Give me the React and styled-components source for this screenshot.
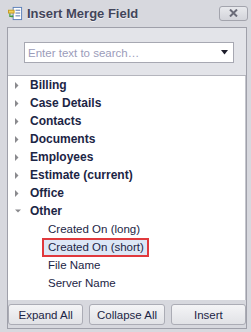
import React from "react";
import styled, { createGlobalStyle } from "styled-components";

const Global = createGlobalStyle`
  html, body { margin: 0; padding: 0; background: #d7d8de; }
  body { font-family: "Liberation Sans", Arial, sans-serif; }
`;

const Window = styled.div`
  width: 251px;
  height: 332px;
  background: #d7d8de;
  display: flex;
  flex-direction: column;
  box-sizing: border-box;
`;

const TitleBar = styled.div`
  height: 27px;
  display: flex;
  align-items: center;
  padding: 0 3px 0 8px;
  gap: 4px;
  flex-shrink: 0;
`;

const Title = styled.div`
  flex: 1;
  font-weight: bold;
  font-size: 13px;
  color: #42455a;
  text-shadow: 0 1px 0 #f2f2f5;
`;

const CloseButton = styled.div`
  width: 29px;
  height: 15px;
  box-sizing: border-box;
  border: 1px solid #a3a4ad;
  border-radius: 3px;
  background: linear-gradient(#e8e9ed, #d3d4da);
  display: flex;
  align-items: center;
  justify-content: center;
  margin-top: -1px;
`;

const Frame = styled.div`
  flex: 1;
  margin: 0 4px 3px 7px;
  border: 1px solid #9fa0aa;
  display: flex;
  flex-direction: column;
  background: #d7d8de;
`;

const SearchArea = styled.div`
  background: #e3e4e9;
  padding: 14px 12px 12px 16px;
  border-bottom: 1px solid #b4b5bd;
`;

const SearchBox = styled.div`
  height: 21px;
  box-sizing: border-box;
  border: 1px solid #a7a8b2;
  background: #fff;
  display: flex;
  align-items: center;
  padding: 0 5px 0 3px;
`;

const Placeholder = styled.span`
  flex: 1;
  font-size: 11.5px;
  color: #9b9cba;
`;

const Tree = styled.div`
  flex: 1;
  background: #fff;
  border-right: 1px solid #c4c5cc;
  display: flex;
  flex-direction: column;
`;

const Row = styled.div`
  height: 18px;
  display: flex;
  align-items: center;
  padding-left: ${(p) => p.$indent}px;
`;

const Arrow = styled.span`
  width: 13px;
  display: flex;
  align-items: center;
  justify-content: flex-start;
`;

const Label = styled.span`
  font-size: ${(p) => (p.$bold ? "12px" : "11.5px")};
  font-weight: ${(p) => (p.$bold ? "bold" : "normal")};
  color: #1c2545;
  line-height: 15px;
  padding: ${(p) => (p.$bold ? "0" : "0 3px 0 4px")};
  border: 2px solid transparent;
  ${(p) =>
    p.$selected &&
    `
    background: #dce7f6;
    border-color: #e0393d;
  `}
`;

const ButtonBar = styled.div`
  display: flex;
  gap: 6px;
  padding: 4px 0 3px 0;
`;

const Button = styled.div`
  flex: 1;
  height: 21px;
  box-sizing: border-box;
  border: 1px solid #abacb5;
  border-radius: 3px;
  background: linear-gradient(#f4f4f6, #e1e2e6);
  display: flex;
  align-items: center;
  justify-content: center;
  font-size: 11.5px;
  color: #1c2545;
`;

const DocIcon = () => (
  <svg width="15" height="15" viewBox="0 0 16 16">
    <rect x="5.5" y="1.5" width="9" height="13" fill="#fff" stroke="#5b7fb8" />
    <line x1="8" y1="4.5" x2="13" y2="4.5" stroke="#4d6fa8" />
    <line x1="8" y1="7.5" x2="13" y2="7.5" stroke="#4d6fa8" />
    <line x1="8" y1="10.5" x2="13" y2="10.5" stroke="#4d6fa8" />
    <rect x="0.5" y="4.5" width="6" height="3" fill="#f3d25a" stroke="#c69a1e" />
    <path d="M2 8 L2 11 L5 11" fill="none" stroke="#3f9a3a" strokeWidth="1.2" />
    <path d="M4 9.5 L6 11 L4 12.5 Z" fill="#3f9a3a" />
  </svg>
);

const RightArrow = () => (
  <svg width="4" height="7" viewBox="0 0 4 7">
    <path d="M0 0 L3.5 3.5 L0 7 Z" fill="#8a8a8e" />
  </svg>
);

const DownArrow = () => (
  <svg width="6" height="4" viewBox="0 0 6 4">
    <path d="M0 0.5 L6 0.5 L3 3.5 Z" fill="#8a8a8e" />
  </svg>
);

const categories = [
  "Billing",
  "Case Details",
  "Contacts",
  "Documents",
  "Employees",
  "Estimate (current)",
  "Office",
];

const children = [
  { label: "Created On (long)" },
  { label: "Created On (short)", selected: true },
  { label: "File Name" },
  { label: "Server Name" },
];

export default function App() {
  return (
    <>
      <Global />
      <Window>
        <TitleBar>
          <DocIcon />
          <Title>Insert Merge Field</Title>
          <CloseButton>
            <svg width="9" height="8" viewBox="0 0 9 8">
              <path d="M1 0.5 L8 7.5 M8 0.5 L1 7.5" stroke="#6a6b78" strokeWidth="2" />
            </svg>
          </CloseButton>
        </TitleBar>
        <Frame>
          <SearchArea>
            <SearchBox>
              <Placeholder>Enter text to search…</Placeholder>
              <svg width="7" height="5" viewBox="0 0 7 5">
                <path d="M0 0 L7 0 L3.5 4.5 Z" fill="#1d1d2b" />
              </svg>
            </SearchBox>
          </SearchArea>
          <Tree>
            {categories.map((c) => (
              <Row key={c} $indent={7}>
                <Arrow>
                  <RightArrow />
                </Arrow>
                <Label $bold>{c}</Label>
              </Row>
            ))}
            <Row $indent={7}>
              <Arrow>
                <DownArrow />
              </Arrow>
              <Label $bold>Other</Label>
            </Row>
            {children.map((c) => (
              <Row key={c.label} $indent={34}>
                <Label $selected={c.selected}>{c.label}</Label>
              </Row>
            ))}
          </Tree>
          <ButtonBar>
            <Button>Expand All</Button>
            <Button>Collapse All</Button>
            <Button>Insert</Button>
          </ButtonBar>
        </Frame>
      </Window>
    </>
  );
}
